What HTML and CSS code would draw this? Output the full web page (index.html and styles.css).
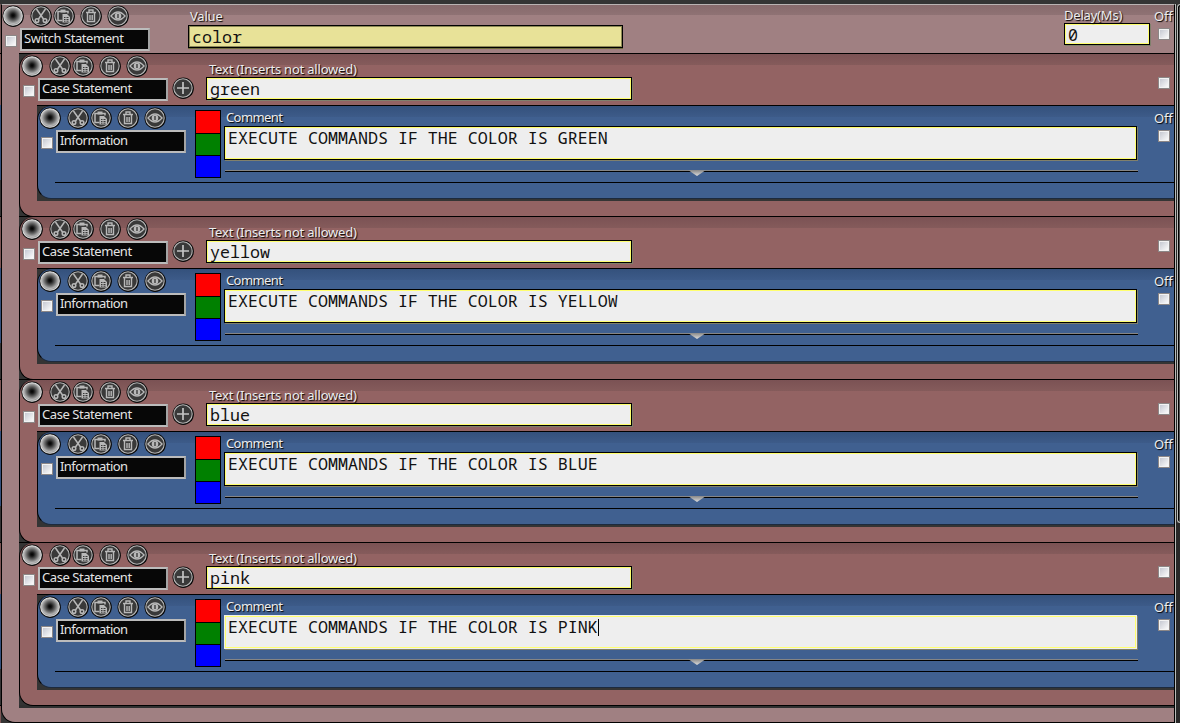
FILE: index.html
```html
<!DOCTYPE html>
<html lang="en">
<head>
<meta charset="utf-8">
<title>Switch Statement</title>
<link rel="stylesheet" href="styles.css">
</head>
<body>
<svg class="defs" width="0" height="0" aria-hidden="true">
  <defs>
    <radialGradient id="knob" cx="50%" cy="47%" r="53%">
      <stop offset="0" stop-color="#000"/><stop offset=".18" stop-color="#151515"/>
      <stop offset=".55" stop-color="#6c6c6c"/><stop offset=".82" stop-color="#b4b4b4"/><stop offset="1" stop-color="#848484"/>
    </radialGradient>
    <g id="disc"><circle cx=".2" cy=".3" r="10.7" fill="#080808"/><circle r="9.2" fill="#393939" stroke="#b5b5b5" stroke-width="1.1"/></g>
    <symbol id="tools" viewBox="0 0 128 22">
      <circle cx="11.2" cy="11.3" r="10.7" fill="#080808"/>
      <circle cx="11" cy="11" r="9.3" fill="url(#knob)" stroke="#dcdcdc" stroke-width="1.1"/>
      <use href="#disc" x="39" y="11"/>
      <g fill="none" stroke="#b8b8b8" stroke-width="1.5">
        <path d="M34.5 4l7.3 10.5M43.5 4l-7.3 10.5"/>
        <circle cx="35" cy="15.5" r="1.8"/><circle cx="43" cy="15.5" r="1.8"/>
      </g>
      <use href="#disc" x="62" y="11"/>
      <path d="M60.5 15.5H56V6.500h10v2" fill="none" stroke="#b8b8b8" stroke-width="1.5"/>
      <path d="M58.5 4.5h5v3h-5z" fill="#b8b8b8"/>
      <path d="M60.5 9H65l3 3v5.500h-7.500z" fill="#b8b8b8"/>
      <path d="M62 12.500h1.500M64.500 12.500h2M62 14.500h1.500M64.500 14.500h2M62 16.200h1.500M64.500 16.200h2" stroke="#393939"/>
      <use href="#disc" x="89" y="11"/>
      <g fill="none" stroke="#b8b8b8" stroke-width="1.4">
        <path d="M84 7.500h10M87 7V5h4v2M85.500 8v8.500h7V8M88 10v5M90.200 10v5"/>
      </g>
      <use href="#disc" x="116" y="11"/>
      <path d="M109 11q7-8 14 0q-7 8-14 0z" fill="none" stroke="#b8b8b8" stroke-width="1.4"/>
      <circle cx="116" cy="11" r="3.3" fill="#b8b8b8"/><path d="M116 9v4" stroke="#333" stroke-width="1.3"/>
    </symbol>
    <symbol id="plus" viewBox="0 0 22 22">
      <use href="#disc" x="11" y="11"/><path d="M11 5v12M5 11h12" stroke="#c4c4c4" stroke-width="1.7"/>
    </symbol>
  </defs>
</svg>
<div class="window">
  <div class="edge"></div>
  <main class="switch">
    <header class="head switch-head">
      <div class="ident">
        <svg class="tools"><use href="#tools"/></svg>
        <div class="name-row"><i class="check"></i><span class="name">Switch Statement</span></div>
      </div>
      <div class="field value"><label>Value</label><div class="input khaki">color</div></div>
      <div class="field delay"><label>Delay(Ms)</label><div class="input">0</div></div>
      <div class="off"><label>Off</label><i class="check"></i></div>
    </header>

    <section class="case">
      <div class="case-body">
        <header class="head">
          <div class="ident"><svg class="tools"><use href="#tools"/></svg><div class="name-row"><i class="check"></i><span class="name">Case Statement</span></div></div>
          <svg class="plus"><use href="#plus"/></svg>
          <div class="field text"><label>Text (Inserts not allowed)</label><div class="input">green</div></div>
          <div class="off"><label></label><i class="check"></i></div>
        </header>
        <div class="info"><div class="info-body">
          <div class="head info-head">
            <div class="ident"><svg class="tools"><use href="#tools"/></svg><div class="name-row"><i class="check"></i><span class="name">Information</span></div></div>
            <div class="swatches"><i class="red"></i><i class="green"></i><i class="blue"></i></div>
            <div class="field comment"><label>Comment</label><div class="input area">EXECUTE COMMANDS IF THE COLOR IS GREEN</div><div class="grip"></div></div>
            <div class="off"><label>Off</label><i class="check"></i></div>
          </div>
        </div></div>
      </div>
    </section>

    <section class="case">
      <div class="case-body">
        <header class="head">
          <div class="ident"><svg class="tools"><use href="#tools"/></svg><div class="name-row"><i class="check"></i><span class="name">Case Statement</span></div></div>
          <svg class="plus"><use href="#plus"/></svg>
          <div class="field text"><label>Text (Inserts not allowed)</label><div class="input">yellow</div></div>
          <div class="off"><label></label><i class="check"></i></div>
        </header>
        <div class="info"><div class="info-body">
          <div class="head info-head">
            <div class="ident"><svg class="tools"><use href="#tools"/></svg><div class="name-row"><i class="check"></i><span class="name">Information</span></div></div>
            <div class="swatches"><i class="red"></i><i class="green"></i><i class="blue"></i></div>
            <div class="field comment"><label>Comment</label><div class="input area">EXECUTE COMMANDS IF THE COLOR IS YELLOW</div><div class="grip"></div></div>
            <div class="off"><label>Off</label><i class="check"></i></div>
          </div>
        </div></div>
      </div>
    </section>

    <section class="case">
      <div class="case-body">
        <header class="head">
          <div class="ident"><svg class="tools"><use href="#tools"/></svg><div class="name-row"><i class="check"></i><span class="name">Case Statement</span></div></div>
          <svg class="plus"><use href="#plus"/></svg>
          <div class="field text"><label>Text (Inserts not allowed)</label><div class="input">blue</div></div>
          <div class="off"><label></label><i class="check"></i></div>
        </header>
        <div class="info"><div class="info-body">
          <div class="head info-head">
            <div class="ident"><svg class="tools"><use href="#tools"/></svg><div class="name-row"><i class="check"></i><span class="name">Information</span></div></div>
            <div class="swatches"><i class="red"></i><i class="green"></i><i class="blue"></i></div>
            <div class="field comment"><label>Comment</label><div class="input area">EXECUTE COMMANDS IF THE COLOR IS BLUE</div><div class="grip"></div></div>
            <div class="off"><label>Off</label><i class="check"></i></div>
          </div>
        </div></div>
      </div>
    </section>

    <section class="case last">
      <div class="case-body">
        <header class="head">
          <div class="ident"><svg class="tools"><use href="#tools"/></svg><div class="name-row"><i class="check"></i><span class="name">Case Statement</span></div></div>
          <svg class="plus"><use href="#plus"/></svg>
          <div class="field text"><label>Text (Inserts not allowed)</label><div class="input">pink</div></div>
          <div class="off"><label></label><i class="check"></i></div>
        </header>
        <div class="info"><div class="info-body">
          <div class="head info-head">
            <div class="ident"><svg class="tools"><use href="#tools"/></svg><div class="name-row"><i class="check"></i><span class="name">Information</span></div></div>
            <div class="swatches"><i class="red"></i><i class="green"></i><i class="blue"></i></div>
            <div class="field comment"><label>Comment</label><div class="input area focused">EXECUTE COMMANDS IF THE COLOR IS PINK<b class="caret"></b></div><div class="grip"></div></div>
            <div class="off"><label>Off</label><i class="check"></i></div>
          </div>
        </div></div>
      </div>
    </section>
  </main>
  <div class="scroll"><div class="thumb"></div></div>
</div>
</body>
</html>
```
FILE: styles.css
```css
* { box-sizing: border-box; }
body { margin: 0; background: #343434; font: 13px/16px "Noto Sans", sans-serif; overflow: hidden; }
.defs { position: absolute; }
.window { display: flex; width: 1180px; height: 723px; padding-top: 4px; background: #343434; overflow: hidden; }
.edge { width: 1px; background: repeating-linear-gradient(#000 0 1px, #7e5656 1px 52px, #33507c 52px 127px, #343434 127px 163px) 0 49px no-repeat #735555; }
.switch { width: 1174px; height: 719px; border-left: 1px solid #000; border-right: 1px solid #000; border-top: 1px solid #b9b3b3; border-bottom: 1px solid #000; border-bottom-left-radius: 14px; background: linear-gradient(#876a6c, #8f7274 10px, #a08082 10px); padding-left: 17px; }
.head { display: flex; align-items: flex-start; }
.switch-head { height: 48px; margin-left: -17px; }
.ident { width: 149px; padding-top: 1px; }
.tools { display: block; width: 128px; height: 22px; margin-left: .6px; }
.name-row { display: flex; align-items: center; margin: 1px 0 0 4px; }
.switch-head .tools { margin-left: 0; }
.switch-head .ident { padding-top: 0; }
.name { width: 130px; height: 23px; margin-left: 2px; padding: 0 0 0 2px; border: 2px solid #bcbcbc; border-right-color: #a4a4a4; background: #070707; color: #e4e4e4; line-height: 17px; letter-spacing: -.44px; white-space: nowrap; }
.info .name { letter-spacing: -.55px; }
.check { display: block; flex: none; width: 12px; height: 12px; margin-top: 2px; border: 2px solid #f3f3f3; outline: 1px solid #8c8787; outline-offset: -1px; background: linear-gradient(135deg, #c6c9d2, #fafafa); }
.name-row .check { margin-left: -.6px; margin-right: .6px; }
label { display: block; height: 16px; color: #ededed; text-shadow: 1px 1px 1px #000; white-space: nowrap; padding-left: 2px; letter-spacing: -.2px; }
.input { height: 22px; border: 1px solid #000; box-shadow: inset 0 0 0 1px #ffff6e, 1px 1px 0 #80806c; background: #eee; color: #111; font: 16.67px/22px "Noto Sans Mono", "DejaVu Sans Mono", monospace; padding-left: 3px; white-space: pre; }
.khaki { height: 23px; background: #e8e298; box-shadow: inset 0 0 0 1px #8d8955, 0 1px 0 #6f6c3c; }
.value { width: 435px; margin: 3px 0 0 37px; }
.value .khaki { margin-top: 1px; }
.delay { width: 86px; margin: 2px 3px 0 auto; }
.delay label { padding-left: 0; height: 16px; }
.off { width: 21px; padding-top: 3px; }
.off label { padding-left: 1px; height: 18px; }
.off .check { margin: 2px 0 0 4.5px; }
.case { height: 163px; background: #343434; border-top: 1px solid #000; }
.case.last { height: 166px; border-bottom: 3px solid #303030; }
.case-body { height: 163px; border-left: 1px solid #000; border-bottom: 1px solid #000; border-radius: 14px 0 0 14px; background: linear-gradient(#7b5254, #855b5b 11px, #936363 11px); }
.case .head { height: 51px; }
.plus { width: 22px; height: 22px; margin: 22.5px 12.5px 0 2.5px; flex: none; }
.text { width: 426px; padding-top: 7px; }
.text label { padding-left: 3px; }
.text .input { height: 23px; }
.text + .off { margin-left: auto; }
.info { height: 96px; margin-left: 17px; background: #343434; border-top: 1px solid #000; }
.info-body { height: 93px; border-left: 1px solid #000; border-radius: 14px 0 0 14px; border-bottom: 1px solid #1c2a3e; background: linear-gradient(#34517c, #3d5b89 11px, #406090 11px); }
.case .info-head { height: 77px; background: linear-gradient(#000, #000) 17px 76px no-repeat; }
.swatches { display: grid; grid-template-rows: 22px 21px 21px; gap: 1px; width: 26px; margin: 4px 3px 0 8px; padding: 1px; background: #000; }
.red { background: #f00; }
.green { background: #008000; }
.blue { background: #00f; }
.comment { width: 913px; padding-top: 4px; }
.comment label { letter-spacing: -.6px; line-height: 15px; }
.area { height: 34px; line-height: 22px; }
.focused { border-color: #eee; }
.caret { display: inline-block; width: 1px; height: 17px; background: #000; vertical-align: -3px; }
.grip { height: 8px; margin: 10px -1px 0 1px; border-top: 1px solid #858585; background: linear-gradient(#000, #000) 0 0 / 100% 1px no-repeat; }
.grip::before { content: ""; display: block; width: 18px; height: 6px; margin: -1px 0 0 463px; background: linear-gradient(#888, #ddd); clip-path: polygon(0 0, 100% 0, 50% 100%); }
.info-head .off { margin-left: auto; padding-top: 4px; }
.scroll { width: 5px; background: #282828; border-left: 1px solid #b8bbb8; padding-left: 1px; }
.thumb { height: 519px; border: 1px solid #b8bbb8; border-right: 0; border-radius: 3px 0 0 3px; background: #555; box-shadow: inset 1px 1px 0 #000; }
```
